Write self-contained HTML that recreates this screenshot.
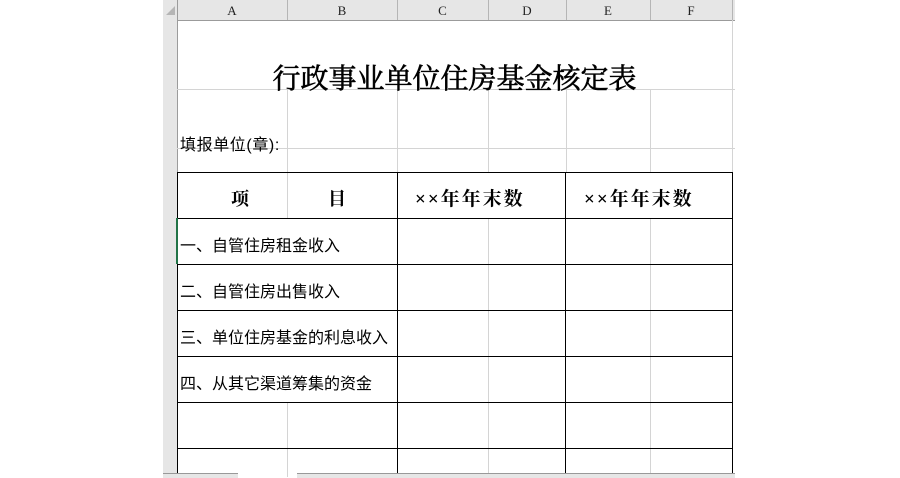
<!DOCTYPE html>
<html><head><meta charset="utf-8"><style>
body{margin:0;width:900px;height:477px;background:#fff;position:relative;overflow:hidden;font-family:"Liberation Sans","Noto Sans CJK SC",sans-serif}
.a{position:absolute}
.vl{position:absolute;width:1px;background:#d4d4d4}
.hl{position:absolute;height:1px;background:#d4d4d4}
.bv{position:absolute;width:1px;background:#000}
.bh{position:absolute;height:1px;background:#000}
.ch{position:absolute;top:0;height:20px;line-height:22px;text-align:center;font-family:"Liberation Serif",serif;font-size:13px;color:#222}
.t{position:absolute;font-size:16px;color:#000;white-space:nowrap}
.s{font-family:"Liberation Serif","Noto Serif CJK SC",serif;font-weight:bold;position:absolute;white-space:nowrap;color:#000}
</style></head><body>
<div class="a" style="left:163px;top:0;width:572px;height:20px;background:#e6e6e6;border-bottom:1px solid #9b9b9b"></div>
<div class="a" style="left:163px;top:0;width:14px;height:477px;background:#e6e6e6;border-right:1px solid #9b9b9b"></div>
<div class="a" style="left:166px;top:6px;width:0;height:0;border-left:9px solid transparent;border-bottom:9px solid #b5b5b5"></div>
<div class="ch" style="left:177px;width:110px">A</div>
<div class="ch" style="left:287px;width:110px">B</div>
<div class="ch" style="left:397px;width:91px">C</div>
<div class="ch" style="left:488px;width:78px">D</div>
<div class="ch" style="left:566px;width:84px">E</div>
<div class="ch" style="left:650px;width:82px">F</div>
<div class="vl" style="left:287px;top:0;height:20px;background:#b5b5b5"></div>
<div class="vl" style="left:397px;top:0;height:20px;background:#b5b5b5"></div>
<div class="vl" style="left:488px;top:0;height:20px;background:#b5b5b5"></div>
<div class="vl" style="left:566px;top:0;height:20px;background:#b5b5b5"></div>
<div class="vl" style="left:650px;top:0;height:20px;background:#b5b5b5"></div>
<div class="vl" style="left:732px;top:0;height:20px;background:#b5b5b5"></div>
<div class="vl" style="left:287px;top:89px;height:83px"></div>
<div class="vl" style="left:397px;top:89px;height:83px"></div>
<div class="vl" style="left:488px;top:89px;height:83px"></div>
<div class="vl" style="left:566px;top:89px;height:83px"></div>
<div class="vl" style="left:650px;top:89px;height:83px"></div>
<div class="vl" style="left:732px;top:20px;height:152px"></div>
<div class="vl" style="left:287px;top:172px;height:46px"></div>
<div class="vl" style="left:287px;top:402px;height:75px"></div>
<div class="vl" style="left:488px;top:218px;height:259px"></div>
<div class="vl" style="left:650px;top:218px;height:259px"></div>
<div class="hl" style="left:177px;top:89px;width:558px"></div>
<div class="hl" style="left:177px;top:148px;width:558px"></div>
<div class="bh" style="left:177px;top:172px;width:556px"></div>
<div class="bh" style="left:177px;top:218px;width:556px"></div>
<div class="bh" style="left:177px;top:264px;width:556px"></div>
<div class="bh" style="left:177px;top:310px;width:556px"></div>
<div class="bh" style="left:177px;top:356px;width:556px"></div>
<div class="bh" style="left:177px;top:402px;width:556px"></div>
<div class="bh" style="left:177px;top:448px;width:556px"></div>
<div class="bv" style="left:177px;top:172px;height:305px"></div>
<div class="bv" style="left:397px;top:172px;height:305px"></div>
<div class="bv" style="left:565px;top:172px;height:305px"></div>
<div class="bv" style="left:732px;top:172px;height:305px"></div>
<div class="a" style="left:176px;top:218px;width:2px;height:46px;background:#217346"></div>
<div class="s" style="left:177px;width:555px;top:57px;text-align:center;font-size:28px;letter-spacing:0;font-weight:normal;-webkit-text-stroke:0.6px #000">行政事业单位住房基金核定表</div>
<div class="t" style="left:180px;top:131px;letter-spacing:0.6px">填报单位(章):</div>
<div class="s" style="left:231px;top:185px;font-size:18px">项</div>
<div class="s" style="left:328px;top:185px;font-size:18px">目</div>
<div class="s" style="left:415px;top:184px;font-size:19px;letter-spacing:2px">××年年末数</div>
<div class="s" style="left:584px;top:184px;font-size:19px;letter-spacing:2px">××年年末数</div>
<div class="t" style="left:180px;top:232px">一、自管住房租金收入</div>
<div class="t" style="left:180px;top:278px">二、自管住房出售收入</div>
<div class="t" style="left:180px;top:324px">三、单位住房基金的利息收入</div>
<div class="t" style="left:180px;top:370px">四、从其它渠道筹集的资金</div>
<div class="a" style="left:163px;top:473px;width:75px;height:4px;background:#e6e6e6;border-top:1px solid #999"></div>
<div class="a" style="left:297px;top:473px;width:438px;height:4px;background:#e6e6e6;border-top:1px solid #999"></div>
</body></html>
